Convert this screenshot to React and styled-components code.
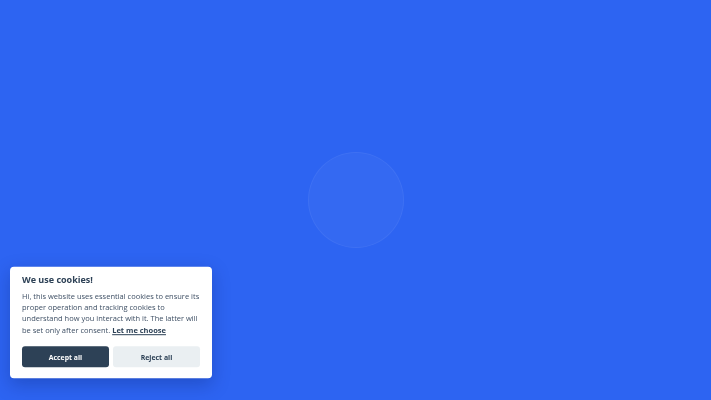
import React from "react";
import styled, { createGlobalStyle } from "styled-components";

const Global = createGlobalStyle`
  html, body { margin: 0; padding: 0; height: 100%; }
  body { background: #2d64f2; font-family: "Open Sans", "Noto Sans", sans-serif; }
  #root { height: 100%; }
`;

const Stage = styled.main`
  height: 100vh;
  display: flex;
  align-items: center;
  justify-content: center;
`;

const Orb = styled.div`
  width: 94px;
  height: 94px;
  border-radius: 50%;
  background: rgba(255, 255, 255, 0.035);
  border: 1px solid rgba(255, 255, 255, 0.05);
`;

/* Drawn at twice its size and scaled down so small text keeps precise glyph widths */
const Modal = styled.section`
  position: fixed;
  left: 10px;
  bottom: 22px;
  width: 404px;
  box-sizing: border-box;
  background: #fff;
  border-radius: 8px;
  box-shadow: 0 12px 36px rgba(0, 20, 80, 0.25);
  padding: 11px 24px 22px;
  color: #2d4156;
  transform: scale(0.5);
  transform-origin: left bottom;
`;

const Title = styled.h2`
  margin: 0;
  font-size: 18px;
  line-height: 28px;
  font-weight: 700;
`;

const Body = styled.p`
  margin: 8px 0 0;
  font-size: 15px;
  line-height: 22.6px;
  color: #3e4f64;
`;

const Link = styled.a`
  color: #2d4156;
  font-weight: 700;
  text-decoration: underline;
  text-decoration-thickness: 2px;
  text-underline-offset: 3px;
`;

const Actions = styled.div`
  display: flex;
  gap: 8px;
  margin-top: 22px;
`;

const Btn = styled.button`
  flex: 1;
  height: 42px;
  border: none;
  border-radius: 6px;
  font-family: inherit;
  font-size: 13.8px;
  font-weight: 700;
  background: ${(p) => (p.$primary ? "#2d4156" : "#eaeff2")};
  color: ${(p) => (p.$primary ? "#fff" : "#2d4156")};
  cursor: pointer;
`;

export default function App() {
  return (
    <>
      <Global />
      <Stage>
        <Orb />
      </Stage>
      <Modal>
        <Title>We use cookies!</Title>
        <Body>
          Hi, this website uses essential cookies to ensure its proper operation and tracking cookies to
          understand how you interact with it. The latter will be set only after consent.{" "}
          <Link href="#">Let me choose</Link>
        </Body>
        <Actions>
          <Btn $primary>Accept all</Btn>
          <Btn>Reject all</Btn>
        </Actions>
      </Modal>
    </>
  );
}
